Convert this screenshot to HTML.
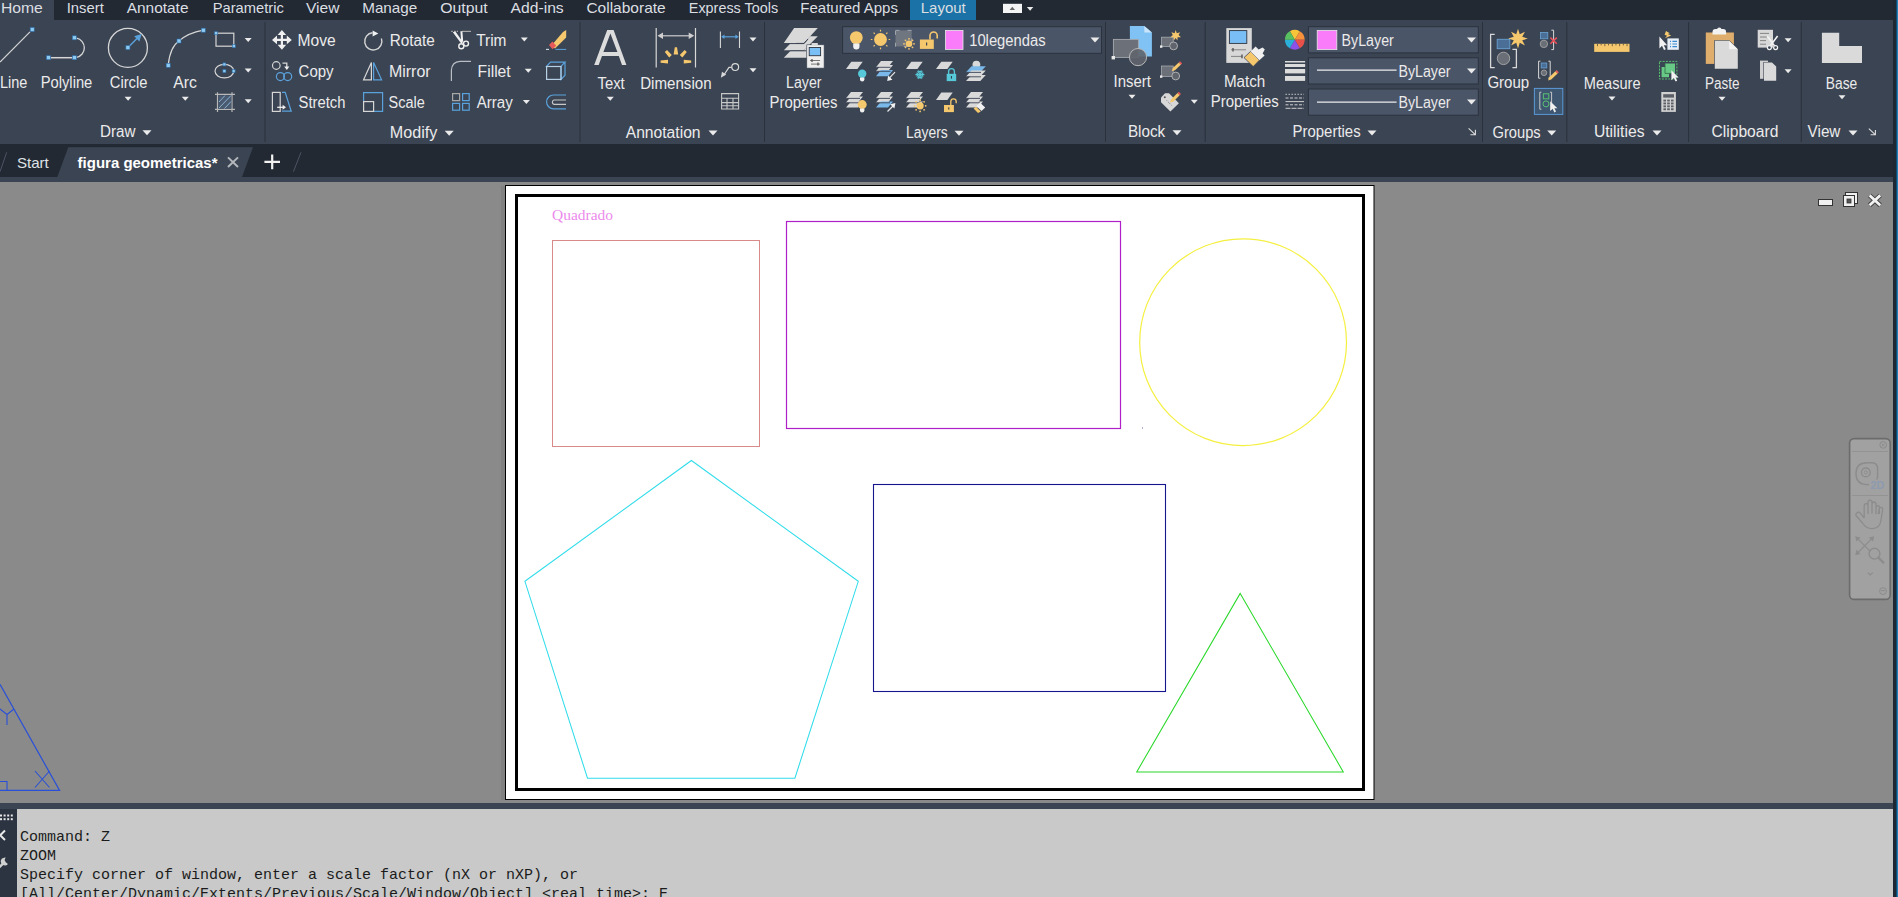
<!DOCTYPE html>
<html><head><meta charset="utf-8"><title>AutoCAD</title>
<style>html,body{margin:0;padding:0;background:#222933;overflow:hidden;width:1898px;height:897px}</style>
</head><body>
<svg width="1898" height="897" viewBox="0 0 1898 897" style="display:block"><rect x="0" y="0" width="1898" height="897" fill="#222933"/>
<rect x="0" y="20" width="1893" height="124" fill="#3b4453"/>
<rect x="0" y="0" width="54" height="20" fill="#3b4453"/>
<rect x="910" y="0" width="66" height="20" fill="#1b72a6"/>
<rect x="0" y="177" width="1893" height="5" fill="#3b4453"/>
<path d="M68.3 147.3H253L242 177H57.3z" fill="#3b4453"/>
<rect x="0" y="182" width="1893" height="621" fill="#8a8a8a"/>
<rect x="0" y="803" width="1894" height="6" fill="#3b4453"/>
<rect x="0" y="809" width="17" height="88" fill="#2c3441"/>
<rect x="17" y="809" width="1876" height="88" fill="#c9c9c9"/>
<rect x="1893" y="0" width="3" height="897" fill="#1e2833"/>
<rect x="1896" y="0" width="1" height="897" fill="#0f4a70"/><rect x="1897" y="0" width="1" height="897" fill="#2282b8"/>
<text x="0.9" y="13" font-size="15" fill="#dcdfe2" font-weight="normal" font-family="Liberation Sans" textLength="41.9" lengthAdjust="spacingAndGlyphs">Home</text>
<text x="66.7" y="13" font-size="15" fill="#dcdfe2" font-weight="normal" font-family="Liberation Sans" textLength="37.1" lengthAdjust="spacingAndGlyphs">Insert</text>
<text x="126.7" y="13" font-size="15" fill="#dcdfe2" font-weight="normal" font-family="Liberation Sans" textLength="61.8" lengthAdjust="spacingAndGlyphs">Annotate</text>
<text x="212.7" y="13" font-size="15" fill="#dcdfe2" font-weight="normal" font-family="Liberation Sans" textLength="71.1" lengthAdjust="spacingAndGlyphs">Parametric</text>
<text x="306.0" y="13" font-size="15" fill="#dcdfe2" font-weight="normal" font-family="Liberation Sans" textLength="33.5" lengthAdjust="spacingAndGlyphs">View</text>
<text x="362.2" y="13" font-size="15" fill="#dcdfe2" font-weight="normal" font-family="Liberation Sans" textLength="55.1" lengthAdjust="spacingAndGlyphs">Manage</text>
<text x="440.2" y="13" font-size="15" fill="#dcdfe2" font-weight="normal" font-family="Liberation Sans" textLength="47.4" lengthAdjust="spacingAndGlyphs">Output</text>
<text x="510.5" y="13" font-size="15" fill="#dcdfe2" font-weight="normal" font-family="Liberation Sans" textLength="53.2" lengthAdjust="spacingAndGlyphs">Add-ins</text>
<text x="586.4" y="13" font-size="15" fill="#dcdfe2" font-weight="normal" font-family="Liberation Sans" textLength="79.3" lengthAdjust="spacingAndGlyphs">Collaborate</text>
<text x="688.8" y="13" font-size="15" fill="#dcdfe2" font-weight="normal" font-family="Liberation Sans" textLength="89.3" lengthAdjust="spacingAndGlyphs">Express Tools</text>
<text x="800.3" y="13" font-size="15" fill="#dcdfe2" font-weight="normal" font-family="Liberation Sans" textLength="97.6" lengthAdjust="spacingAndGlyphs">Featured Apps</text>
<text x="920.8" y="13" font-size="15" fill="#dcdfe2" font-weight="normal" font-family="Liberation Sans" textLength="44.9" lengthAdjust="spacingAndGlyphs">Layout</text>
<rect x="264.5" y="22" width="1" height="120" fill="#2a313c"/>
<rect x="579.5" y="22" width="1" height="120" fill="#2a313c"/>
<rect x="764.0" y="22" width="1" height="120" fill="#2a313c"/>
<rect x="1105.0" y="22" width="1" height="120" fill="#2a313c"/>
<rect x="1204.7" y="22" width="1" height="120" fill="#2a313c"/>
<rect x="1482.0" y="22" width="1" height="120" fill="#2a313c"/>
<rect x="1566.3" y="22" width="1" height="120" fill="#2a313c"/>
<rect x="1688.1" y="22" width="1" height="120" fill="#2a313c"/>
<rect x="1800.8" y="22" width="1" height="120" fill="#2a313c"/>
<path d="M0 62L30 31.8" stroke="#d6d6d6" stroke-width="1.2" fill="none"/>
<rect x="30.2" y="27.5" width="4" height="4" fill="#8ccaf2" stroke="#2d6da8" stroke-width="0.6"/>
<path d="M50.5 57.7H72.4" stroke="#d6d6d6" stroke-width="1.5" fill="none"/>
<path d="M76.5 38.2A9.8 9.8 0 0 1 76.5 57.4" stroke="#d6d6d6" stroke-width="1.3" fill="none"/>
<rect x="46.5" y="55.7" width="4" height="4" fill="#8ccaf2" stroke="#2d6da8" stroke-width="0.6"/>
<rect x="72.4" y="55.7" width="4" height="4" fill="#8ccaf2" stroke="#2d6da8" stroke-width="0.6"/>
<rect x="72.4" y="35.8" width="4" height="4" fill="#8ccaf2" stroke="#2d6da8" stroke-width="0.6"/>
<circle cx="127.9" cy="47.8" r="19.5" stroke="#d6d6d6" stroke-width="1.3" fill="none"/>
<path d="M128 47.6L139 36.6" stroke="#5aa2dc" stroke-width="1.4"/><path d="M141.6 34L134.2 36.2L139.4 41.4z" fill="#5aa2dc"/>
<rect x="125.9" y="45.6" width="4" height="4" fill="#8ccaf2" stroke="#2d6da8" stroke-width="0.6"/>
<path d="M168.2 65.3Q170 47 179 41Q188 33 203.3 30.2" stroke="#d6d6d6" stroke-width="1.2" fill="none"/>
<rect x="166.2" y="63.3" width="4" height="4" fill="#8ccaf2" stroke="#2d6da8" stroke-width="0.6"/>
<rect x="177.0" y="39.0" width="4" height="4" fill="#8ccaf2" stroke="#2d6da8" stroke-width="0.6"/>
<rect x="201.3" y="28.2" width="4" height="4" fill="#8ccaf2" stroke="#2d6da8" stroke-width="0.6"/>
<path d="M124.6 96.7h7l-3.5 4z" fill="#ebebeb"/>
<path d="M181.8 96.7h7l-3.5 4z" fill="#ebebeb"/>
<rect x="216" y="33.2" width="17.8" height="13" stroke="#d6d6d6" stroke-width="1.2" fill="none"/>
<rect x="214.5" y="31.7" width="3" height="3" fill="#8ccaf2" stroke="#2d6da8" stroke-width="0.6"/>
<rect x="232.3" y="44.7" width="3" height="3" fill="#8ccaf2" stroke="#2d6da8" stroke-width="0.6"/>
<path d="M244.7 37.9h7l-3.5 4z" fill="#ebebeb"/>
<ellipse cx="224.4" cy="71.1" rx="9.4" ry="6.8" stroke="#d6d6d6" stroke-width="1.2" fill="none"/>
<rect x="222.9" y="62.9" width="3" height="3" fill="#8ccaf2" stroke="#2d6da8" stroke-width="0.6"/>
<rect x="222.9" y="69.6" width="3" height="3" fill="#8ccaf2" stroke="#2d6da8" stroke-width="0.6"/>
<rect x="232.1" y="69.6" width="3" height="3" fill="#8ccaf2" stroke="#2d6da8" stroke-width="0.6"/>
<path d="M244.7 68.6h7l-3.5 4z" fill="#ebebeb"/>
<path d="M217.5 92.2V112M232 92.2V112M215 94.4H235M215 109.4H235" stroke="#b8b8b8" stroke-width="1.2" fill="none"/>
<rect x="218.5" y="95.4" width="12.8" height="13.2" fill="#4a5a70"/>
<path d="M219 102L225 95.5M219 108L231 95.5M224.5 108.5L231 101.5" stroke="#8ab0d0" stroke-width="1" fill="none"/>
<path d="M244.7 99.2h7l-3.5 4z" fill="#ebebeb"/>
<path d="M142.5 130.2h9l-4.5 5z" fill="#ebebeb"/>
<path d="M281.9 32V48M274 39.9H290" stroke="#f0f0f0" stroke-width="2.2"/>
<path d="M281.9 30L277.6 35H286.2zM281.9 49.7L277.6 44.7H286.2zM272 39.9L277 35.6V44.2zM291.8 39.9L286.8 35.6V44.2z" fill="#f0f0f0"/>
<path d="M372.5 32.8A8.6 8.6 0 1 0 381.4 38.5" stroke="#d6d6d6" stroke-width="1.4" fill="none"/>
<path d="M372.6 30.4L378.4 33.4L372.6 36.6z" fill="#f0f0f0"/>
<circle cx="276.3" cy="65.5" r="3.8" stroke="#d6d6d6" stroke-width="1.2" fill="none"/>
<path d="M282.5 63.2H286.8V67" stroke="#d6d6d6" stroke-width="1.3" fill="none"/><path d="M284.2 66.4H289.4L286.8 70z" fill="#f0f0f0"/>
<circle cx="280.4" cy="76.6" r="4" stroke="#5aa2dc" stroke-width="1.2" fill="none"/><circle cx="287.7" cy="76.6" r="4" stroke="#5aa2dc" stroke-width="1.2" fill="none"/>
<path d="M363.6 79.8L371.4 62.4V79.8z" stroke="#d6d6d6" stroke-width="1.2" fill="none"/><path d="M373.6 62.4L381.6 79.8H373.6z" stroke="#5aa2dc" stroke-width="1.2" fill="none"/>
<rect x="272.4" y="92.4" width="7.8" height="19" stroke="#d6d6d6" stroke-width="1.2" fill="none"/>
<path d="M282 111.2H291.2L285.2 92.4H282" stroke="#5aa2dc" stroke-width="1.2" fill="none"/>
<path d="M277.2 107.3H283" stroke="#f0f0f0" stroke-width="1.3"/><path d="M282.6 104.8L286 107.3L282.6 109.8z" fill="#f0f0f0"/>
<path d="M363.6 101V92.6H382.6V111.4H374" stroke="#5aa2dc" stroke-width="1.2" fill="none"/>
<rect x="363.6" y="101.6" width="10" height="9.8" stroke="#d6d6d6" stroke-width="1.2" fill="none"/>
<path d="M451.2 31.4H458" stroke="#a8a8a8" stroke-width="1.2" stroke-dasharray="1.6 1.2"/><path d="M462 31.4H471" stroke="#a8a8a8" stroke-width="1.2"/>
<path d="M452.8 32.2L455.4 31.6L463 42.2L461.2 43.4zM460.4 31.2H462.4L463.2 41.6L461.2 42.4z" fill="#f0f0f0"/>
<circle cx="461.3" cy="46.2" r="2.5" stroke="#f0f0f0" stroke-width="1.4" fill="none"/><circle cx="466" cy="43.6" r="2.5" stroke="#f0f0f0" stroke-width="1.4" fill="none"/>
<path d="M520.8 37.4h7l-3.5 4z" fill="#ebebeb"/>
<path d="M551 46L563 32L566.2 30V37.5L555 48.5z" fill="#f6c86e"/><path d="M549 45L552.5 41.5L556.2 45.8L552.5 49.2z" fill="#e85a5a"/>
<path d="M546 49.4H549M555.5 49.4H566.2" stroke="#5aa2dc" stroke-width="1"/><path d="M546 49.4H549" stroke="#dddddd" stroke-width="1"/>
<path d="M451.4 81V70Q452 62 460 61.4H471" stroke="#b9bdc4" stroke-width="1.2" fill="none"/>
<path d="M524.8 68.7h7l-3.5 4z" fill="#ebebeb"/>
<path d="M546.5 66.5L550.5 62.2H565L561 66.5zM561 66.5V79.4L565 75.2V62.2" stroke="#5aa2dc" stroke-width="1.2" fill="none"/>
<rect x="546.6" y="66.5" width="14.4" height="12.9" stroke="#b8d0e6" stroke-width="1.2" fill="none"/>
<rect x="452.6" y="93.6" width="7" height="7" stroke="#a8a8a8" stroke-width="1.2" fill="none"/>
<rect x="462.6" y="93.6" width="6.6" height="7" stroke="#5aa2dc" stroke-width="1.2" fill="none"/><rect x="452.6" y="103.4" width="7" height="6.8" stroke="#5aa2dc" stroke-width="1.2" fill="none"/><rect x="462.6" y="103.4" width="6.6" height="6.8" stroke="#5aa2dc" stroke-width="1.2" fill="none"/>
<path d="M522.9 100.0h7l-3.5 4z" fill="#ebebeb"/>
<path d="M566 95H553.5A6.9 6.9 0 0 0 553.5 108.8H566" stroke="#5aa2dc" stroke-width="1.2" fill="none"/><path d="M566 100H554A2.3 2.3 0 0 0 554 104.4H566" stroke="#c8c8c8" stroke-width="1.2" fill="none"/>
<path d="M444.7 130.7h9l-4.5 5z" fill="#ebebeb"/>
<path d="M594.2 65.1L607.2 30H613.6L626.4 65.1H622L618.8 56H602L598.7 65.1zM603.4 52H617.4L610.4 33.6z" fill="#dcdcdc" fill-rule="evenodd"/>
<path d="M656.2 28V67.6M695.5 28V67.6" stroke="#d8d8d8" stroke-width="1.2"/>
<path d="M661 35.8H691" stroke="#cfcfcf" stroke-width="1.2"/><path d="M657.5 35.8L663 32.6V39zM694.2 35.8L688.7 32.6V39z" fill="#cfcfcf"/>
<path d="M674.8 47.2H677L678.2 54.4H673.6zM664.8 52L667 50L671.8 55L669.2 57.6zM686.8 52L684.6 50L679.8 55L682.4 57.6zM660.6 60.6L668 59.8V63.6L660.6 62.8zM691.2 60.6L683.8 59.8V63.6L691.2 62.8z" fill="#f6c86e"/>
<path d="M720.4 31.5V48.1M739.5 31.5V48.1" stroke="#d8d8d8" stroke-width="1.1"/><path d="M723 36.8H737" stroke="#5aa2dc" stroke-width="1.2"/><path d="M721.2 36.8L724.5 34.6V39zM738.7 36.8L735.4 34.6V39z" fill="#5aa2dc"/>
<path d="M749.5 37.5h7l-3.5 4z" fill="#ebebeb"/>
<circle cx="735.2" cy="67.1" r="3.4" stroke="#d8d8d8" stroke-width="1.2" fill="none"/><path d="M731.8 67.4H729L723.5 75.5" stroke="#d8d8d8" stroke-width="1.2" fill="none"/><path d="M720.9 77.8L722 71.8L726.2 74.6z" fill="#d8d8d8"/>
<path d="M749.5 68.3h7l-3.5 4z" fill="#ebebeb"/>
<path d="M721.6 93.6H738.6V109H721.6zM721.6 98.2H738.6M721.6 102.6H738.6M721.6 105.8H738.6M727 98.2V109M733 98.2V109" stroke="#c8c8c8" stroke-width="1.1" fill="none"/>
<path d="M606.8 96.7h7l-3.5 4z" fill="#ebebeb"/>
<path d="M708.5 130.5h9l-4.5 5z" fill="#ebebeb"/>
<path d="M794.1 28.1H817.8L804 43H783.8z" fill="#d9d9d9"/>
<path d="M810 36.2H817.8L804 50.3H783.8L790.2 43.8H804z" fill="#d9d9d9"/>
<path d="M808 44.5L804 50.8H790.6L783.8 57.8H806.8V44.5z" fill="#d9d9d9"/>
<path d="M796 43.4L804 43.4L808 39L804 43.6H790" stroke="#3b4453" stroke-width="0.8" fill="none"/>
<path d="M790 50.8H806.5" stroke="#3b4453" stroke-width="1"/>
<rect x="806.8" y="44.8" width="17.3" height="23.3" fill="#eeeeee" stroke="#3b4453" stroke-width="0.6"/><rect x="811.6" y="43" width="6.2" height="2" fill="#d8d8d8"/>
<rect x="809.2" y="47.5" width="11.4" height="8.2" fill="#79bff5" stroke="#2b3340" stroke-width="0.9"/>
<path d="M810 60.5H820M811 64.1H820" stroke="#6a6a6a" stroke-width="0.9"/><path d="M812 59V62M818 62.6V65.6" stroke="#4a4a4a" stroke-width="1.2"/>
<rect x="842.6" y="26.7" width="258.9" height="26.6" fill="#4b5568" stroke="#2b323e" stroke-width="1"/>
<circle cx="856.3" cy="37.6" r="6.4" fill="#f6c86e"/><path d="M853.2 43.6H859.5V46.5A3.15 3 0 0 1 853.2 46.5z" fill="#f0f0f0"/>
<circle cx="880.5" cy="39.5" r="6.4" fill="#f6c86e"/>
<path d="M880.5 29.8V31.4M880.5 47.6V49.2M870.8 39.5H872.4M888.6 39.5H890.2M873.6 32.6L874.8 33.8M886.2 45.2L887.4 46.4M887.4 32.6L886.2 33.8M874.8 45.2L873.6 46.4" stroke="#f6c86e" stroke-width="1.2"/>
<rect x="895.5" y="30.4" width="16.2" height="16" fill="#70767f" stroke="#a8acb2" stroke-width="0.9" stroke-dasharray="4 8"/>
<circle cx="909" cy="43.8" r="3.3" fill="#f6c86e"/><g fill="#f6c86e"><circle cx="909" cy="38.8" r="0.9"/><circle cx="909" cy="48.8" r="0.9"/><circle cx="904" cy="43.8" r="0.9"/><circle cx="914" cy="43.8" r="0.9"/><circle cx="905.5" cy="40.3" r="0.9"/><circle cx="912.5" cy="40.3" r="0.9"/><circle cx="905.5" cy="47.3" r="0.9"/><circle cx="912.5" cy="47.3" r="0.9"/></g>
<rect x="919.9" y="39.5" width="13.9" height="9.4" fill="#f6c86e"/><path d="M930 39.6V35.6A3.6 3.6 0 0 1 937.2 35.6V38.4" stroke="#f6c86e" stroke-width="1.6" fill="none"/><path d="M926.6 42.6V45.6" stroke="#3b4453" stroke-width="1.2"/>
<rect x="945.6" y="30.4" width="17.4" height="19" fill="#fb7cfb" stroke="#e8e8e8" stroke-width="0.8"/>
<path d="M1090.5 37.5h9l-4.5 5z" fill="#ebebeb"/>
<path d="M851.3 61.7H862.7L857.4 69.0H846.0z" fill="#d9d9d9"/>
<circle cx="862.2" cy="73.8" r="4.2" fill="#56c8d8"/><path d="M860 77.4H864.4V79.4A2.2 2 0 0 1 860 79.4z" fill="#f0f0f0"/>
<path d="M881.0 60.9H893.0L888.0 67.3H876.0z" fill="#d9d9d9"/>
<path d="M881.0 64.9H893.0L888.0 71.3H876.0z" fill="#d9d9d9"/>
<path d="M881.0 69.9H893.0L888.0 76.3H876.0z" fill="#7ab8ea"/>
<path d="M876.5 67.3H890.5M876.5 71.3H890.5" stroke="#3b4453" stroke-width="0.9"/>
<path d="M895 72.2L889.5 77.8" stroke="#e8e8e8" stroke-width="1.2"/><path d="M887.2 80.9L888.2 75.6L892.4 79.8z" fill="#f0f0f0"/>
<path d="M911.3 61.7H922.7L917.4 69.0H906.0z" fill="#d9d9d9"/>
<g stroke="#56c8d8" stroke-width="1.2" fill="none"><path d="M915.4 74.6H924.4M917.6 70.8L922.2 78.4M917.6 78.4L922.2 70.8"/><path d="M916.6 72.6L918.2 74.6L916.6 76.6M923.2 72.6L921.6 74.6L923.2 76.6M918.4 70.6L919.9 72.2L921.4 70.6M918.4 78.6L919.9 77L921.4 78.6"/></g>
<path d="M941.3 61.7H952.7L947.4 69.0H936.0z" fill="#d9d9d9"/>
<rect x="946.7" y="73.8" width="9.5" height="7.3" fill="#56c8d8"/><path d="M948.6 73.9V71.6A2.9 2.9 0 0 1 954.4 71.6V73.9" stroke="#56c8d8" stroke-width="1.3" fill="none"/><path d="M951.4 76V78.6" stroke="#2b3340" stroke-width="1"/>
<circle cx="976.4" cy="64.6" r="3.9" fill="#d9d9d9"/>
<path d="M971.5 66.2H985.8L980.3 72.2H966.0z" fill="#7ab8ea"/>
<path d="M971.5 70.6H985.8L980.3 76.6H966.0z" fill="#d9d9d9"/>
<path d="M971.5 75.0H985.8L980.3 81.0H966.0z" fill="#d9d9d9"/>
<path d="M966.5 72.4H981M966.5 76.8H981" stroke="#3b4453" stroke-width="0.9"/>
<path d="M851.0 92.0H863.0L858.0 98.2H846.0z" fill="#d9d9d9"/>
<path d="M851.0 96.4H863.0L858.0 102.6H846.0z" fill="#d9d9d9"/>
<path d="M851.0 101.4H863.0L858.0 107.6H846.0z" fill="#d9d9d9"/>
<path d="M846.5 98.4H860 M846.5 102.8H860" stroke="#3b4453" stroke-width="0.9"/>
<path d="M881.0 92.0H893.0L888.0 98.2H876.0z" fill="#d9d9d9"/>
<path d="M881.0 96.4H893.0L888.0 102.6H876.0z" fill="#d9d9d9"/>
<path d="M881.0 101.4H893.0L888.0 107.6H876.0z" fill="#7ab8ea"/>
<path d="M876.5 98.4H890 M876.5 102.8H890" stroke="#3b4453" stroke-width="0.9"/>
<path d="M911.0 92.0H923.0L918.0 98.2H906.0z" fill="#d9d9d9"/>
<path d="M911.0 96.4H923.0L918.0 102.6H906.0z" fill="#d9d9d9"/>
<path d="M911.0 101.4H923.0L918.0 107.6H906.0z" fill="#d9d9d9"/>
<path d="M906.5 98.4H920 M906.5 102.8H920" stroke="#3b4453" stroke-width="0.9"/>
<path d="M971.0 92.0H983.0L978.0 98.2H966.0z" fill="#d9d9d9"/>
<path d="M971.0 96.4H983.0L978.0 102.6H966.0z" fill="#d9d9d9"/>
<path d="M971.0 101.4H983.0L978.0 107.6H966.0z" fill="#d9d9d9"/>
<path d="M966.5 98.4H980 M966.5 102.8H980" stroke="#3b4453" stroke-width="0.9"/>
<circle cx="862.2" cy="104.6" r="4.5" fill="#f6c86e"/><path d="M860 108.6H864.4V110.6A2.2 2 0 0 1 860 110.6z" fill="#f0f0f0"/>
<path d="M887.5 111.5L893 106" stroke="#e8e8e8" stroke-width="1.2"/><path d="M895.4 103L894.4 108.4L890.2 104.2z" fill="#f0f0f0"/>
<circle cx="920.1" cy="105.8" r="3.6" fill="#f6c86e"/><g fill="#f6c86e"><circle cx="920.1" cy="100.2" r="0.9"/><circle cx="920.1" cy="111.4" r="0.9"/><circle cx="914.5" cy="105.8" r="0.9"/><circle cx="925.7" cy="105.8" r="0.9"/><circle cx="916.1" cy="101.8" r="0.9"/><circle cx="924.1" cy="101.8" r="0.9"/><circle cx="916.1" cy="109.8" r="0.9"/><circle cx="924.1" cy="109.8" r="0.9"/></g>
<path d="M941.3 92.6H952.7L947.4 99.9H936.0z" fill="#d9d9d9"/>
<rect x="944" y="105" width="9.9" height="7.1" fill="#f6c86e"/><path d="M950.8 105V101.6A2.7 2.7 0 0 1 956.2 101.6V103.2" stroke="#f6c86e" stroke-width="1.3" fill="none"/><path d="M948.8 107.3V109.6" stroke="#2b3340" stroke-width="1"/>
<path d="M976.5 106.2L980 102.5L985.2 107.5L981.5 111z" fill="#f0f0f0"/><path d="M976 106.8L980.8 111.6L978 113L973.6 108.6z" fill="#f6c86e"/>
<path d="M954.5 130.8h9l-4.5 5z" fill="#ebebeb"/>
<path d="M1129.9 26H1144.3L1151.9 32.5V56.6H1129.9z" fill="#7fc2f3"/><path d="M1144.3 26V32.5H1151.9" fill="#c8e4fa"/>
<rect x="1113.4" y="39.4" width="25" height="18" fill="#6c7079" stroke="#a6a9ae" stroke-width="0.9"/>
<circle cx="1138" cy="57.1" r="8.6" fill="#5f646d" fill-opacity="0.9" stroke="#b8b8b8" stroke-width="1"/>
<rect x="1111.6" y="56" width="3.4" height="3.4" fill="#e8e8e8"/>
<path d="M1128.5 94.7h7l-3.5 4z" fill="#ebebeb"/>
<rect x="1161.4" y="37.2" width="11.8" height="9.4" fill="#6c7079" stroke="#a6a9ae" stroke-width="0.8"/><circle cx="1173.6" cy="45.9" r="3.9" fill="#5f646d" stroke="#b8b8b8" stroke-width="0.9"/><rect x="1160" y="45.4" width="2.4" height="2.4" fill="#e8e8e8"/>
<path d="M1175.7 30L1176.8 33.2L1180 32.2L1178.6 35.1L1181 37.2L1177.6 37.2L1177.4 40.4L1175.7 38L1173.8 40.4L1173.6 37.2L1170.4 37.2L1172.8 35.1L1171.4 32.2L1174.6 33.2z" fill="#f6c86e"/>
<rect x="1161.4" y="66" width="11.8" height="10.5" fill="#6c7079" stroke="#a6a9ae" stroke-width="0.8"/><circle cx="1175.7" cy="76" r="3.9" fill="#5f646d" stroke="#b8b8b8" stroke-width="0.9"/><rect x="1160" y="75.4" width="2.4" height="2.4" fill="#e8e8e8"/>
<path d="M1171.8 71.2L1172.8 68L1178.8 62.4L1181 64.6L1175 70.2z" fill="#f6c86e"/><path d="M1178.8 62.4L1180 61.2L1182.2 63.4L1181 64.6z" fill="#e85a5a"/>
<path d="M1161 97.5L1165 93.3H1169L1178.9 103.2L1170.4 111.6L1161 102.2z" fill="#d8d8d8"/><circle cx="1164.8" cy="97.2" r="1" fill="#555"/><path d="M1166.6 100.4L1172 105.8" stroke="#666" stroke-width="0.8" stroke-dasharray="1 1"/>
<path d="M1170 102.5L1171 99.5L1177.5 93L1179.7 95.2L1173.2 101.7z" fill="#f6c86e"/><path d="M1177.5 93L1178.8 91.7L1181 93.9L1179.7 95.2z" fill="#e85a5a"/>
<path d="M1190.8 99.7h7l-3.5 4z" fill="#ebebeb"/>
<path d="M1172.5 130.3h9l-4.5 5z" fill="#ebebeb"/>
<rect x="1226.3" y="28.1" width="25.5" height="34.8" fill="#d8d8d8"/><rect x="1229.4" y="30.6" width="17.4" height="12.8" fill="#79bff5" stroke="#2b3340" stroke-width="0.9"/>
<path d="M1231 49.8H1246M1231 56.4H1242" stroke="#7a7a7a" stroke-width="0.9"/><path d="M1233 48V51.6M1242 54.6V58.2" stroke="#555" stroke-width="1.4"/>
<path d="M1244 57.6L1250.6 51.4L1259.4 60.2L1253.2 66.6z" fill="#f6c86e" stroke="#3b4453" stroke-width="0.8"/><path d="M1250.6 51.4L1255.6 46.6L1258.6 49.6L1262.6 47.4L1264.8 49.6L1262.6 53.6L1264.6 55.6L1259.4 60.2z" fill="#f0f0f0"/>
<path d="M1294.8 39.8L1289.85 31.23A9.9 9.9 0 0 1 1299.75 31.23z" fill="#f7c43a"/>
<path d="M1294.8 39.8L1299.75 31.23A9.9 9.9 0 0 1 1304.70 39.80z" fill="#f7923a"/>
<path d="M1294.8 39.8L1304.70 39.80A9.9 9.9 0 0 1 1299.75 48.37z" fill="#e8504a"/>
<path d="M1294.8 39.8L1299.75 48.37A9.9 9.9 0 0 1 1289.85 48.37z" fill="#8c52e8"/>
<path d="M1294.8 39.8L1289.85 48.37A9.9 9.9 0 0 1 1284.90 39.80z" fill="#2ab0d8"/>
<path d="M1294.8 39.8L1284.90 39.80A9.9 9.9 0 0 1 1289.85 31.23z" fill="#58c060"/>
<path d="M1285 61.7H1305.1M1285 65.5H1305.1M1285 71.2H1305.1M1285 78.5H1305.1" stroke="#dcdcdc" stroke-width="1.4"/>
<rect x="1285" y="64" width="20.1" height="3" fill="#dcdcdc"/><rect x="1285" y="69" width="20.1" height="4.4" fill="#dcdcdc"/><rect x="1285" y="76" width="20.1" height="4.9" fill="#dcdcdc"/>
<g stroke="#cfcfcf" stroke-width="1"><path d="M1285.5 94.3H1304" stroke-dasharray="1.4 1.6"/><path d="M1285.5 98H1304" stroke-dasharray="3 1.5"/><path d="M1285.5 101.6H1304"/><path d="M1285.5 104.8H1304" stroke-dasharray="3 1.5"/><path d="M1285.5 108.3H1304" stroke-dasharray="5 1"/></g>
<rect x="1308.4" y="26.7" width="169.9" height="26.2" fill="#4b5568" stroke="#2b323e" stroke-width="1"/>
<rect x="1308.4" y="57.8" width="169.9" height="26.2" fill="#4b5568" stroke="#2b323e" stroke-width="1"/>
<rect x="1308.4" y="89" width="169.9" height="26.2" fill="#4b5568" stroke="#2b323e" stroke-width="1"/>
<rect x="1317.2" y="30.4" width="19.6" height="19.2" fill="#fb7cfb" stroke="#e8e8e8" stroke-width="0.8"/>
<path d="M1317 70.1H1396.6M1317 102.2H1396.6" stroke="#ececec" stroke-width="1.2"/>
<path d="M1467.0 37.5h9l-4.5 5z" fill="#ebebeb"/>
<path d="M1467.0 68.5h9l-4.5 5z" fill="#ebebeb"/>
<path d="M1467.0 99.5h9l-4.5 5z" fill="#ebebeb"/>
<path d="M1367.5 130.5h9l-4.5 5z" fill="#ebebeb"/>
<path d="M1468.6 128.4L1475 134.4M1475.4 129.8V134.8H1470.4" stroke="#dcdcdc" stroke-width="1.1" fill="none"/>
<path d="M1494.7 34.3H1490.6V67.6H1494.7M1512.4 49.3H1516.4V67.6H1512.4" stroke="#d8d8d8" stroke-width="1.3" fill="none"/>
<rect x="1497.2" y="39.3" width="12.6" height="9.4" fill="#4a6e96" stroke="#6aa2d4" stroke-width="0.9"/>
<circle cx="1503.5" cy="58.4" r="6.2" fill="#6a6e76" stroke="#aaaaaa" stroke-width="0.9"/>
<path d="M1518.00 28.80L1519.76 34.35L1524.93 31.67L1522.25 36.84L1527.80 38.60L1522.25 40.36L1524.93 45.53L1519.76 42.85L1518.00 48.40L1516.24 42.85L1511.07 45.53L1513.75 40.36L1508.20 38.60L1513.75 36.84L1511.07 31.67L1516.24 34.35z" fill="#f6c86e"/>
<rect x="1540.4" y="32.4" width="7.4" height="6.4" fill="#4a6e96" stroke="#6aa2d4" stroke-width="0.8"/><circle cx="1543.9" cy="43.9" r="3.7" fill="#6a6e76" stroke="#aaaaaa" stroke-width="0.8"/>
<path d="M1551.4 30.2H1553.6V49.6H1551.4" stroke="#d8d8d8" stroke-width="1" fill="none"/>
<path d="M1550.4 37.6L1556.8 43.8M1556.8 37.6L1550.4 43.8" stroke="#e8505a" stroke-width="1.6"/>
<path d="M1540.4 61.2H1538.6V78.2H1540.4M1548.4 61.2H1550.2V78.2H1548.4" stroke="#d8d8d8" stroke-width="1" fill="none"/>
<rect x="1541.2" y="63" width="5.6" height="5" fill="#4a6e96" stroke="#6aa2d4" stroke-width="0.8"/><circle cx="1544" cy="72.8" r="2.8" fill="#6a6e76" stroke="#aaaaaa" stroke-width="0.8"/>
<path d="M1548.2 80.4L1549 77.4L1555.4 71.2L1557.6 73.4L1551.2 79.6z" fill="#f6c86e"/><path d="M1555.4 71.2L1556.6 70L1558.8 72.2L1557.6 73.4z" fill="#e85a5a"/>
<rect x="1534.4" y="88.4" width="28.4" height="26" fill="#3e5670" stroke="#5a9ad8" stroke-width="1"/>
<path d="M1541.4 92.2H1539.8V109.2H1541.4M1550 92.2H1551.6V109.2H1550" stroke="#c8c8c8" stroke-width="1" fill="none"/>
<rect x="1543.4" y="93.8" width="5.4" height="5" fill="none" stroke="#58c070" stroke-width="1"/><circle cx="1546" cy="103.9" r="3" fill="none" stroke="#58c070" stroke-width="1"/>
<path d="M1550.2 101.2V111L1552.6 108.8L1554.4 112.4L1556 111.6L1554.4 108.2H1557.4z" fill="#f0f0f0"/>
<path d="M1547.2 130.5h9l-4.5 5z" fill="#ebebeb"/>
<rect x="1594.2" y="43.8" width="35.3" height="8.1" fill="#f6c86e"/>
<rect x="1597.0" y="43.8" width="0.9" height="2.4" fill="#6a5a3a"/>
<rect x="1600.7" y="43.8" width="0.9" height="1.6" fill="#6a5a3a"/>
<rect x="1604.4" y="43.8" width="0.9" height="2.4" fill="#6a5a3a"/>
<rect x="1608.1" y="43.8" width="0.9" height="1.6" fill="#6a5a3a"/>
<rect x="1611.8" y="43.8" width="0.9" height="2.4" fill="#6a5a3a"/>
<rect x="1615.5" y="43.8" width="0.9" height="1.6" fill="#6a5a3a"/>
<rect x="1619.2" y="43.8" width="0.9" height="2.4" fill="#6a5a3a"/>
<rect x="1622.9" y="43.8" width="0.9" height="1.6" fill="#6a5a3a"/>
<rect x="1626.6" y="43.8" width="0.9" height="2.4" fill="#6a5a3a"/>
<path d="M1608.5 96.5h7l-3.5 4z" fill="#ebebeb"/>
<rect x="1667.4" y="38.4" width="11.4" height="11.4" fill="#e8eef6"/><path d="M1670 41.4H1671M1672.4 41.4H1677M1670 44H1671M1672.4 44H1677M1670 46.6H1671M1672.4 46.6H1677" stroke="#3a8ad0" stroke-width="1.1"/>
<path d="M1666 31L1669.8 33.2L1667.8 34L1671.2 35.6L1665 38.2L1667 35.8L1664.6 34.8z" fill="#f6c86e"/>
<path d="M1659.4 36.6V48.4L1662 45.8L1664 50L1665.8 49.2L1663.8 45.2H1667.2z" fill="#f2f2f2"/>
<rect x="1659.5" y="61.4" width="17.4" height="17.6" fill="none" stroke="#58c070" stroke-width="1" stroke-dasharray="2 1.2"/>
<path d="M1665 63.4H1675V73.4H1669V77.2H1661.6V67H1665z" fill="#68c886"/><path d="M1665 63.4V73.4H1675" stroke="#2f6a44" stroke-width="0.8" fill="none"/>
<path d="M1671.4 70.2V80.2L1673.8 78L1675.6 81.6L1677.2 80.8L1675.6 77.4H1678.6z" fill="#f2f2f2"/>
<rect x="1661.3" y="92" width="14.6" height="19.9" fill="#d0d0d0"/><rect x="1663.2" y="94.2" width="10.8" height="3.4" fill="#5a5f66"/>
<rect x="1663.4" y="99.6" width="2.6" height="1.9" fill="#5a5f66"/>
<rect x="1667.2" y="99.6" width="2.6" height="1.9" fill="#5a5f66"/>
<rect x="1671.0" y="99.6" width="2.6" height="1.9" fill="#5a5f66"/>
<rect x="1663.4" y="102.5" width="2.6" height="1.9" fill="#5a5f66"/>
<rect x="1667.2" y="102.5" width="2.6" height="1.9" fill="#5a5f66"/>
<rect x="1671.0" y="102.5" width="2.6" height="1.9" fill="#5a5f66"/>
<rect x="1663.4" y="105.4" width="2.6" height="1.9" fill="#5a5f66"/>
<rect x="1667.2" y="105.4" width="2.6" height="1.9" fill="#5a5f66"/>
<rect x="1671.0" y="105.4" width="2.6" height="1.9" fill="#5a5f66"/>
<rect x="1663.4" y="108.3" width="2.6" height="1.9" fill="#5a5f66"/>
<rect x="1667.2" y="108.3" width="2.6" height="1.9" fill="#5a5f66"/>
<rect x="1671.0" y="108.3" width="2.6" height="1.9" fill="#5a5f66"/>
<path d="M1652.5 130.5h9l-4.5 5z" fill="#ebebeb"/>
<rect x="1705.8" y="32.5" width="28.1" height="31.4" fill="#e0ae6c"/>
<path d="M1712.5 34.5V32A3 3 0 0 1 1715.5 29H1723A3 3 0 0 1 1726.1 32V34.5z" fill="#f2f2f2"/><circle cx="1719.3" cy="29.6" r="2.2" fill="#f2f2f2"/>
<path d="M1714.2 40.2H1729.3L1738.3 49.1V69.3H1714.2z" fill="#3b4453"/>
<path d="M1714.8 40.8H1729.1L1737.8 49.3V68.8H1714.8z" fill="#dadada"/><path d="M1729.1 40.8V49.3H1737.8z" fill="#f4f4f4"/>
<path d="M1718.5 96.8h7l-3.5 4z" fill="#ebebeb"/>
<rect x="1757.7" y="29.8" width="15.3" height="17.8" fill="#d8d8d8"/><path d="M1760 33.4H1769M1760 37H1767M1760 40.6H1766M1760 44.2H1766" stroke="#7a7a7a" stroke-width="0.9"/>
<path d="M1767.2 36L1774.6 46M1777.6 36L1770.2 46" stroke="#f2f2f2" stroke-width="1.6"/><circle cx="1769.4" cy="47.6" r="2" stroke="#f2f2f2" stroke-width="1.2" fill="#3b4453"/><circle cx="1775.6" cy="47.6" r="2" stroke="#f2f2f2" stroke-width="1.2" fill="#3b4453"/>
<path d="M1784.6 38.3h7l-3.5 4z" fill="#ebebeb"/>
<path d="M1760 60.6H1768L1768 78.8H1760z" fill="#d0d0d0"/><path d="M1763.4 62H1772.4L1776.6 66.2V81.2H1763.4z" fill="#3b4453"/><path d="M1764 62.6H1772L1776.2 66.6V80.8H1764z" fill="#dadada"/>
<path d="M1784.6 69.3h7l-3.5 4z" fill="#ebebeb"/>
<path d="M1821.9 32.8H1839.2V45.9H1862V63.1H1821.9z" fill="#dadada"/>
<path d="M1838.5 95.2h7l-3.5 4z" fill="#ebebeb"/>
<path d="M1848.5 130.5h9l-4.5 5z" fill="#ebebeb"/>
<path d="M1868.8 128.6L1875 134.4M1875.4 130V134.8H1870.6" stroke="#dcdcdc" stroke-width="1.1" fill="none"/>
<path d="M228 157.4L238 167M238 157.4L228 167" stroke="#b4b8bd" stroke-width="2"/>
<path d="M264.4 161.8H280M272.2 154.4V169.2" stroke="#f2f2f2" stroke-width="2.2"/>
<path d="M301 152.3L293.4 171.7" stroke="#4c5564" stroke-width="1"/><path d="M6.7 152.3L0 171.7" stroke="#4c5564" stroke-width="1"/>
<rect x="1003" y="3.8" width="19" height="9.2" fill="#f4f4f4"/><path d="M1009.6 10L1012.3 6.8L1015 10z" fill="#666"/>
<path d="M1026.8 7.1h6.5l-3.2 3.6z" fill="#ebebeb"/>
<rect x="501" y="186" width="4" height="614" fill="#7c7c7c" opacity="0.6"/>
<rect x="505.5" y="185.5" width="868.5" height="614" fill="#ffffff" stroke="#000" stroke-width="1"/>
<rect x="516.5" y="195.5" width="847" height="594" fill="none" stroke="#000" stroke-width="3"/>
<text x="552" y="219.7" font-size="15" font-family="Liberation Serif" fill="#ec8aec" textLength="61" lengthAdjust="spacingAndGlyphs">Quadrado</text>
<rect x="552.5" y="240.5" width="207" height="206" fill="none" stroke="#d88a88" stroke-width="1"/>
<rect x="786.5" y="221.5" width="334" height="207" fill="none" stroke="#b020c8" stroke-width="1.2"/>
<circle cx="1243.1" cy="342.2" r="103.4" fill="none" stroke="#f4f040" stroke-width="1.2"/>
<rect x="1142" y="427.5" width="1" height="1" fill="#6060a0"/>
<path d="M691.4 460.5L858.3 581.3L794.9 778.2H587.5L524.9 581.3z" fill="none" stroke="#30dcea" stroke-width="1.05"/>
<rect x="873.5" y="484.5" width="292" height="207" fill="none" stroke="#16168c" stroke-width="1.1"/>
<path d="M1240.2 593.4L1343.3 772H1136.7z" fill="none" stroke="#2ad82a" stroke-width="1.05"/>
<path d="M0 684.4L59.6 790.4H0" fill="none" stroke="#2850d8" stroke-width="1.2"/>
<path d="M0 781.5H7V790M35 771L49.5 787.5M35 787.5L49.5 771" stroke="#2850d8" stroke-width="1.1" fill="none"/>
<path d="M0 709L7 714.5L14 709M7 714.5V725" stroke="#2850d8" stroke-width="1.1" fill="none"/>
<rect x="1818.5" y="199.5" width="14" height="6" fill="#f0f0f0" stroke="#333" stroke-width="1"/>
<rect x="1845.5" y="192.5" width="12" height="11" fill="#f0f0f0" stroke="#333" stroke-width="1"/>
<rect x="1843.5" y="195.5" width="11" height="11" fill="#f0f0f0" stroke="#333" stroke-width="1"/><rect x="1847" y="199" width="4" height="4" fill="#555" stroke="#333" stroke-width="0.8"/>
<path d="M1869.6 195.4L1880.2 205.2M1880.2 195.4L1869.6 205.2" stroke="#3a3a3a" stroke-width="4.6"/><path d="M1869.6 195.4L1880.2 205.2M1880.2 195.4L1869.6 205.2" stroke="#f0f0f0" stroke-width="2.8"/>
<rect x="1849.6" y="438.6" width="40.6" height="160.8" rx="4.5" fill="#a1a1a1" stroke="#6c6c6c" stroke-width="1.6"/>
<path d="M1852 451.5H1888M1852 495.5H1888" stroke="#939393" stroke-width="1"/>
<circle cx="1883.2" cy="444.9" r="3.4" fill="none" stroke="#8c8c8c" stroke-width="1"/><path d="M1881.6 443.3L1884.8 446.5M1884.8 443.3L1881.6 446.5" stroke="#8c8c8c" stroke-width="0.9"/>
<path d="M1867 462.8H1872Q1877.6 462.8 1877.6 469V476Q1877.6 484.6 1867 484.6Q1856 484.6 1856 473.5Q1856 462.8 1867 462.8z" fill="none" stroke="#8c8c8c" stroke-width="1.4"/>
<circle cx="1865.8" cy="472.4" r="4.4" fill="none" stroke="#8c8c8c" stroke-width="1.4"/><circle cx="1865.8" cy="472.4" r="1.6" fill="none" stroke="#8c8c8c" stroke-width="0.8"/>
<rect x="1869" y="479.5" width="16" height="11" fill="#a1a1a1"/>
<text x="1870.4" y="489.4" font-size="10" font-weight="bold" fill="#8c9ab0" font-family="Liberation Sans" textLength="13.8" lengthAdjust="spacingAndGlyphs">2D</text>
<path d="M1856 515.5L1862.5 523Q1866 528.6 1872 528.6Q1880 528.6 1881 520L1882.6 510Q1883 507.4 1881 507.4Q1879.4 507.4 1879 510L1878.2 514M1864.2 518V506Q1864.2 503.6 1866.2 503.6Q1868 503.6 1868 506V514M1868 513.6V502.6Q1868 500.2 1870 500.2Q1872 500.2 1872 502.6V513.6M1872 513.6V504.2Q1872 502 1874 502Q1876 502 1876 504.2V514.2M1876 508Q1876 505.6 1878 505.6Q1879.6 505.6 1879.4 508V514M1864.2 518L1860.6 513.4Q1858.6 511.4 1856.8 513Q1855.4 514.2 1856 515.5" stroke="#8c8c8c" stroke-width="1.3" fill="none" stroke-linejoin="round"/>
<path d="M1855.6 536.6L1873.8 554.8M1873.8 536.6L1855.6 554.8" stroke="#8c8c8c" stroke-width="1.2" fill="none"/>
<path d="M1855.4 536.4L1860.6 537.4L1856.4 541.6zM1874 536.4L1868.8 537.4L1873 541.6zM1855.4 555L1856.4 549.8L1860.6 554z" fill="#8c8c8c"/>
<circle cx="1874.5" cy="553.7" r="5.4" fill="#a1a1a1" stroke="#8c8c8c" stroke-width="1.4"/><path d="M1878.4 557.6L1883.4 562.6" stroke="#8c8c8c" stroke-width="2.2" stroke-linecap="round"/>
<path d="M1867.8 572.6L1870.3 575L1872.8 572.6" stroke="#8c8c8c" stroke-width="1.1" fill="none"/>
<circle cx="1883" cy="591.1" r="3.4" fill="none" stroke="#8c8c8c" stroke-width="1"/><path d="M1881 590.6H1885" stroke="#8c8c8c" stroke-width="1"/>
<g fill="#e8e8e8"><rect x="0.0" y="814.5" width="2" height="2"/><rect x="0.0" y="818.2" width="2" height="2"/><rect x="3.6" y="814.5" width="2" height="2"/><rect x="3.6" y="818.2" width="2" height="2"/><rect x="7.2" y="814.5" width="2" height="2"/><rect x="7.2" y="818.2" width="2" height="2"/><rect x="10.8" y="814.5" width="2" height="2"/><rect x="10.8" y="818.2" width="2" height="2"/></g>
<path d="M5 830.5L0.2 835.3L5 840" stroke="#e8e8e8" stroke-width="2" fill="none"/>
<path d="M-1 867.5L4 862.5" stroke="#d0d0d0" stroke-width="2.6" fill="none"/><path d="M2 858.5A4 4 0 1 0 8 864L6 862.5L4.6 860.2L5.6 857.2z" fill="#d0d0d0"/>
<text x="-0.1" y="88.3" font-size="16" fill="#ebebeb" font-weight="normal" font-family="Liberation Sans" textLength="27.4" lengthAdjust="spacingAndGlyphs">Line</text>
<text x="40.7" y="88.3" font-size="16" fill="#ebebeb" font-weight="normal" font-family="Liberation Sans" textLength="51.6" lengthAdjust="spacingAndGlyphs">Polyline</text>
<text x="109.8" y="88.3" font-size="16" fill="#ebebeb" font-weight="normal" font-family="Liberation Sans" textLength="37.6" lengthAdjust="spacingAndGlyphs">Circle</text>
<text x="173.2" y="88.3" font-size="16" fill="#ebebeb" font-weight="normal" font-family="Liberation Sans" textLength="23.6" lengthAdjust="spacingAndGlyphs">Arc</text>
<text x="99.9" y="137.4" font-size="16" fill="#ebebeb" font-weight="normal" font-family="Liberation Sans" textLength="35.5" lengthAdjust="spacingAndGlyphs">Draw</text>
<text x="297.5" y="45.8" font-size="16" fill="#ebebeb" font-weight="normal" font-family="Liberation Sans" textLength="38.1" lengthAdjust="spacingAndGlyphs">Move</text>
<text x="389.7" y="45.8" font-size="16" fill="#ebebeb" font-weight="normal" font-family="Liberation Sans" textLength="45.1" lengthAdjust="spacingAndGlyphs">Rotate</text>
<text x="476.2" y="45.8" font-size="16" fill="#ebebeb" font-weight="normal" font-family="Liberation Sans" textLength="30.3" lengthAdjust="spacingAndGlyphs">Trim</text>
<text x="298.6" y="77" font-size="16" fill="#ebebeb" font-weight="normal" font-family="Liberation Sans" textLength="35.0" lengthAdjust="spacingAndGlyphs">Copy</text>
<text x="388.9" y="77" font-size="16" fill="#ebebeb" font-weight="normal" font-family="Liberation Sans" textLength="41.7" lengthAdjust="spacingAndGlyphs">Mirror</text>
<text x="477.6" y="77" font-size="16" fill="#ebebeb" font-weight="normal" font-family="Liberation Sans" textLength="33.1" lengthAdjust="spacingAndGlyphs">Fillet</text>
<text x="298.6" y="108.2" font-size="16" fill="#ebebeb" font-weight="normal" font-family="Liberation Sans" textLength="46.8" lengthAdjust="spacingAndGlyphs">Stretch</text>
<text x="388.5" y="108.2" font-size="16" fill="#ebebeb" font-weight="normal" font-family="Liberation Sans" textLength="36.2" lengthAdjust="spacingAndGlyphs">Scale</text>
<text x="476.7" y="108.2" font-size="16" fill="#ebebeb" font-weight="normal" font-family="Liberation Sans" textLength="36.1" lengthAdjust="spacingAndGlyphs">Array</text>
<text x="389.7" y="137.7" font-size="16" fill="#ebebeb" font-weight="normal" font-family="Liberation Sans" textLength="47.6" lengthAdjust="spacingAndGlyphs">Modify</text>
<text x="597.5" y="88.6" font-size="16" fill="#ebebeb" font-weight="normal" font-family="Liberation Sans" textLength="27.2" lengthAdjust="spacingAndGlyphs">Text</text>
<text x="640.2" y="88.6" font-size="16" fill="#ebebeb" font-weight="normal" font-family="Liberation Sans" textLength="71.4" lengthAdjust="spacingAndGlyphs">Dimension</text>
<text x="625.7" y="137.9" font-size="16" fill="#ebebeb" font-weight="normal" font-family="Liberation Sans" textLength="74.9" lengthAdjust="spacingAndGlyphs">Annotation</text>
<text x="786.1" y="88.1" font-size="16" fill="#ebebeb" font-weight="normal" font-family="Liberation Sans" textLength="35.4" lengthAdjust="spacingAndGlyphs">Layer</text>
<text x="769.5" y="108" font-size="16" fill="#ebebeb" font-weight="normal" font-family="Liberation Sans" textLength="68.0" lengthAdjust="spacingAndGlyphs">Properties</text>
<text x="969.2" y="45.7" font-size="16" fill="#ebebeb" font-weight="normal" font-family="Liberation Sans" textLength="76.4" lengthAdjust="spacingAndGlyphs">10legendas</text>
<text x="906.0" y="137.5" font-size="16" fill="#ebebeb" font-weight="normal" font-family="Liberation Sans" textLength="41.8" lengthAdjust="spacingAndGlyphs">Layers</text>
<text x="1113.5" y="86.8" font-size="16" fill="#ebebeb" font-weight="normal" font-family="Liberation Sans" textLength="37.3" lengthAdjust="spacingAndGlyphs">Insert</text>
<text x="1127.9" y="137.4" font-size="16" fill="#ebebeb" font-weight="normal" font-family="Liberation Sans" textLength="37.3" lengthAdjust="spacingAndGlyphs">Block</text>
<text x="1223.9" y="87.1" font-size="16" fill="#ebebeb" font-weight="normal" font-family="Liberation Sans" textLength="41.4" lengthAdjust="spacingAndGlyphs">Match</text>
<text x="1210.7" y="107" font-size="16" fill="#ebebeb" font-weight="normal" font-family="Liberation Sans" textLength="68.1" lengthAdjust="spacingAndGlyphs">Properties</text>
<text x="1341.6" y="46.1" font-size="16" fill="#ebebeb" font-weight="normal" font-family="Liberation Sans" textLength="52.2" lengthAdjust="spacingAndGlyphs">ByLayer</text>
<text x="1398.5" y="77.2" font-size="16" fill="#ebebeb" font-weight="normal" font-family="Liberation Sans" textLength="52.1" lengthAdjust="spacingAndGlyphs">ByLayer</text>
<text x="1398.5" y="108" font-size="16" fill="#ebebeb" font-weight="normal" font-family="Liberation Sans" textLength="52.1" lengthAdjust="spacingAndGlyphs">ByLayer</text>
<text x="1292.6" y="137.3" font-size="16" fill="#ebebeb" font-weight="normal" font-family="Liberation Sans" textLength="68.0" lengthAdjust="spacingAndGlyphs">Properties</text>
<text x="1487.4" y="87.5" font-size="16" fill="#ebebeb" font-weight="normal" font-family="Liberation Sans" textLength="41.8" lengthAdjust="spacingAndGlyphs">Group</text>
<text x="1492.5" y="137.5" font-size="16" fill="#ebebeb" font-weight="normal" font-family="Liberation Sans" textLength="48.2" lengthAdjust="spacingAndGlyphs">Groups</text>
<text x="1583.8" y="88.9" font-size="16" fill="#ebebeb" font-weight="normal" font-family="Liberation Sans" textLength="56.8" lengthAdjust="spacingAndGlyphs">Measure</text>
<text x="1593.9" y="137.3" font-size="16" fill="#ebebeb" font-weight="normal" font-family="Liberation Sans" textLength="50.6" lengthAdjust="spacingAndGlyphs">Utilities</text>
<text x="1704.9" y="88.9" font-size="16" fill="#ebebeb" font-weight="normal" font-family="Liberation Sans" textLength="34.5" lengthAdjust="spacingAndGlyphs">Paste</text>
<text x="1711.5" y="137.3" font-size="16" fill="#ebebeb" font-weight="normal" font-family="Liberation Sans" textLength="66.9" lengthAdjust="spacingAndGlyphs">Clipboard</text>
<text x="1825.8" y="88.9" font-size="16" fill="#ebebeb" font-weight="normal" font-family="Liberation Sans" textLength="31.5" lengthAdjust="spacingAndGlyphs">Base</text>
<text x="1807.6" y="137.3" font-size="16" fill="#ebebeb" font-weight="normal" font-family="Liberation Sans" textLength="32.8" lengthAdjust="spacingAndGlyphs">View</text>
<text x="16.9" y="168" font-size="15" fill="#dfe2e6" font-weight="normal" font-family="Liberation Sans" textLength="31.9" lengthAdjust="spacingAndGlyphs">Start</text>
<text x="77.6" y="168" font-size="15" fill="#ffffff" font-weight="bold" font-family="Liberation Sans" textLength="139.9" lengthAdjust="spacingAndGlyphs">figura geometricas*</text>
<text x="20" y="840.5" font-size="15" font-family="Liberation Mono" fill="#1b1b1b" xml:space="preserve">Command: Z</text>
<text x="20" y="859.5" font-size="15" font-family="Liberation Mono" fill="#1b1b1b" xml:space="preserve">ZOOM</text>
<text x="20" y="878.5" font-size="15" font-family="Liberation Mono" fill="#1b1b1b" xml:space="preserve">Specify corner of window, enter a scale factor (nX or nXP), or</text>
<text x="20" y="897.5" font-size="15" font-family="Liberation Mono" fill="#1b1b1b" xml:space="preserve">[All/Center/Dynamic/Extents/Previous/Scale/Window/Object] &lt;real time&gt;: E</text></svg>
</body></html>
